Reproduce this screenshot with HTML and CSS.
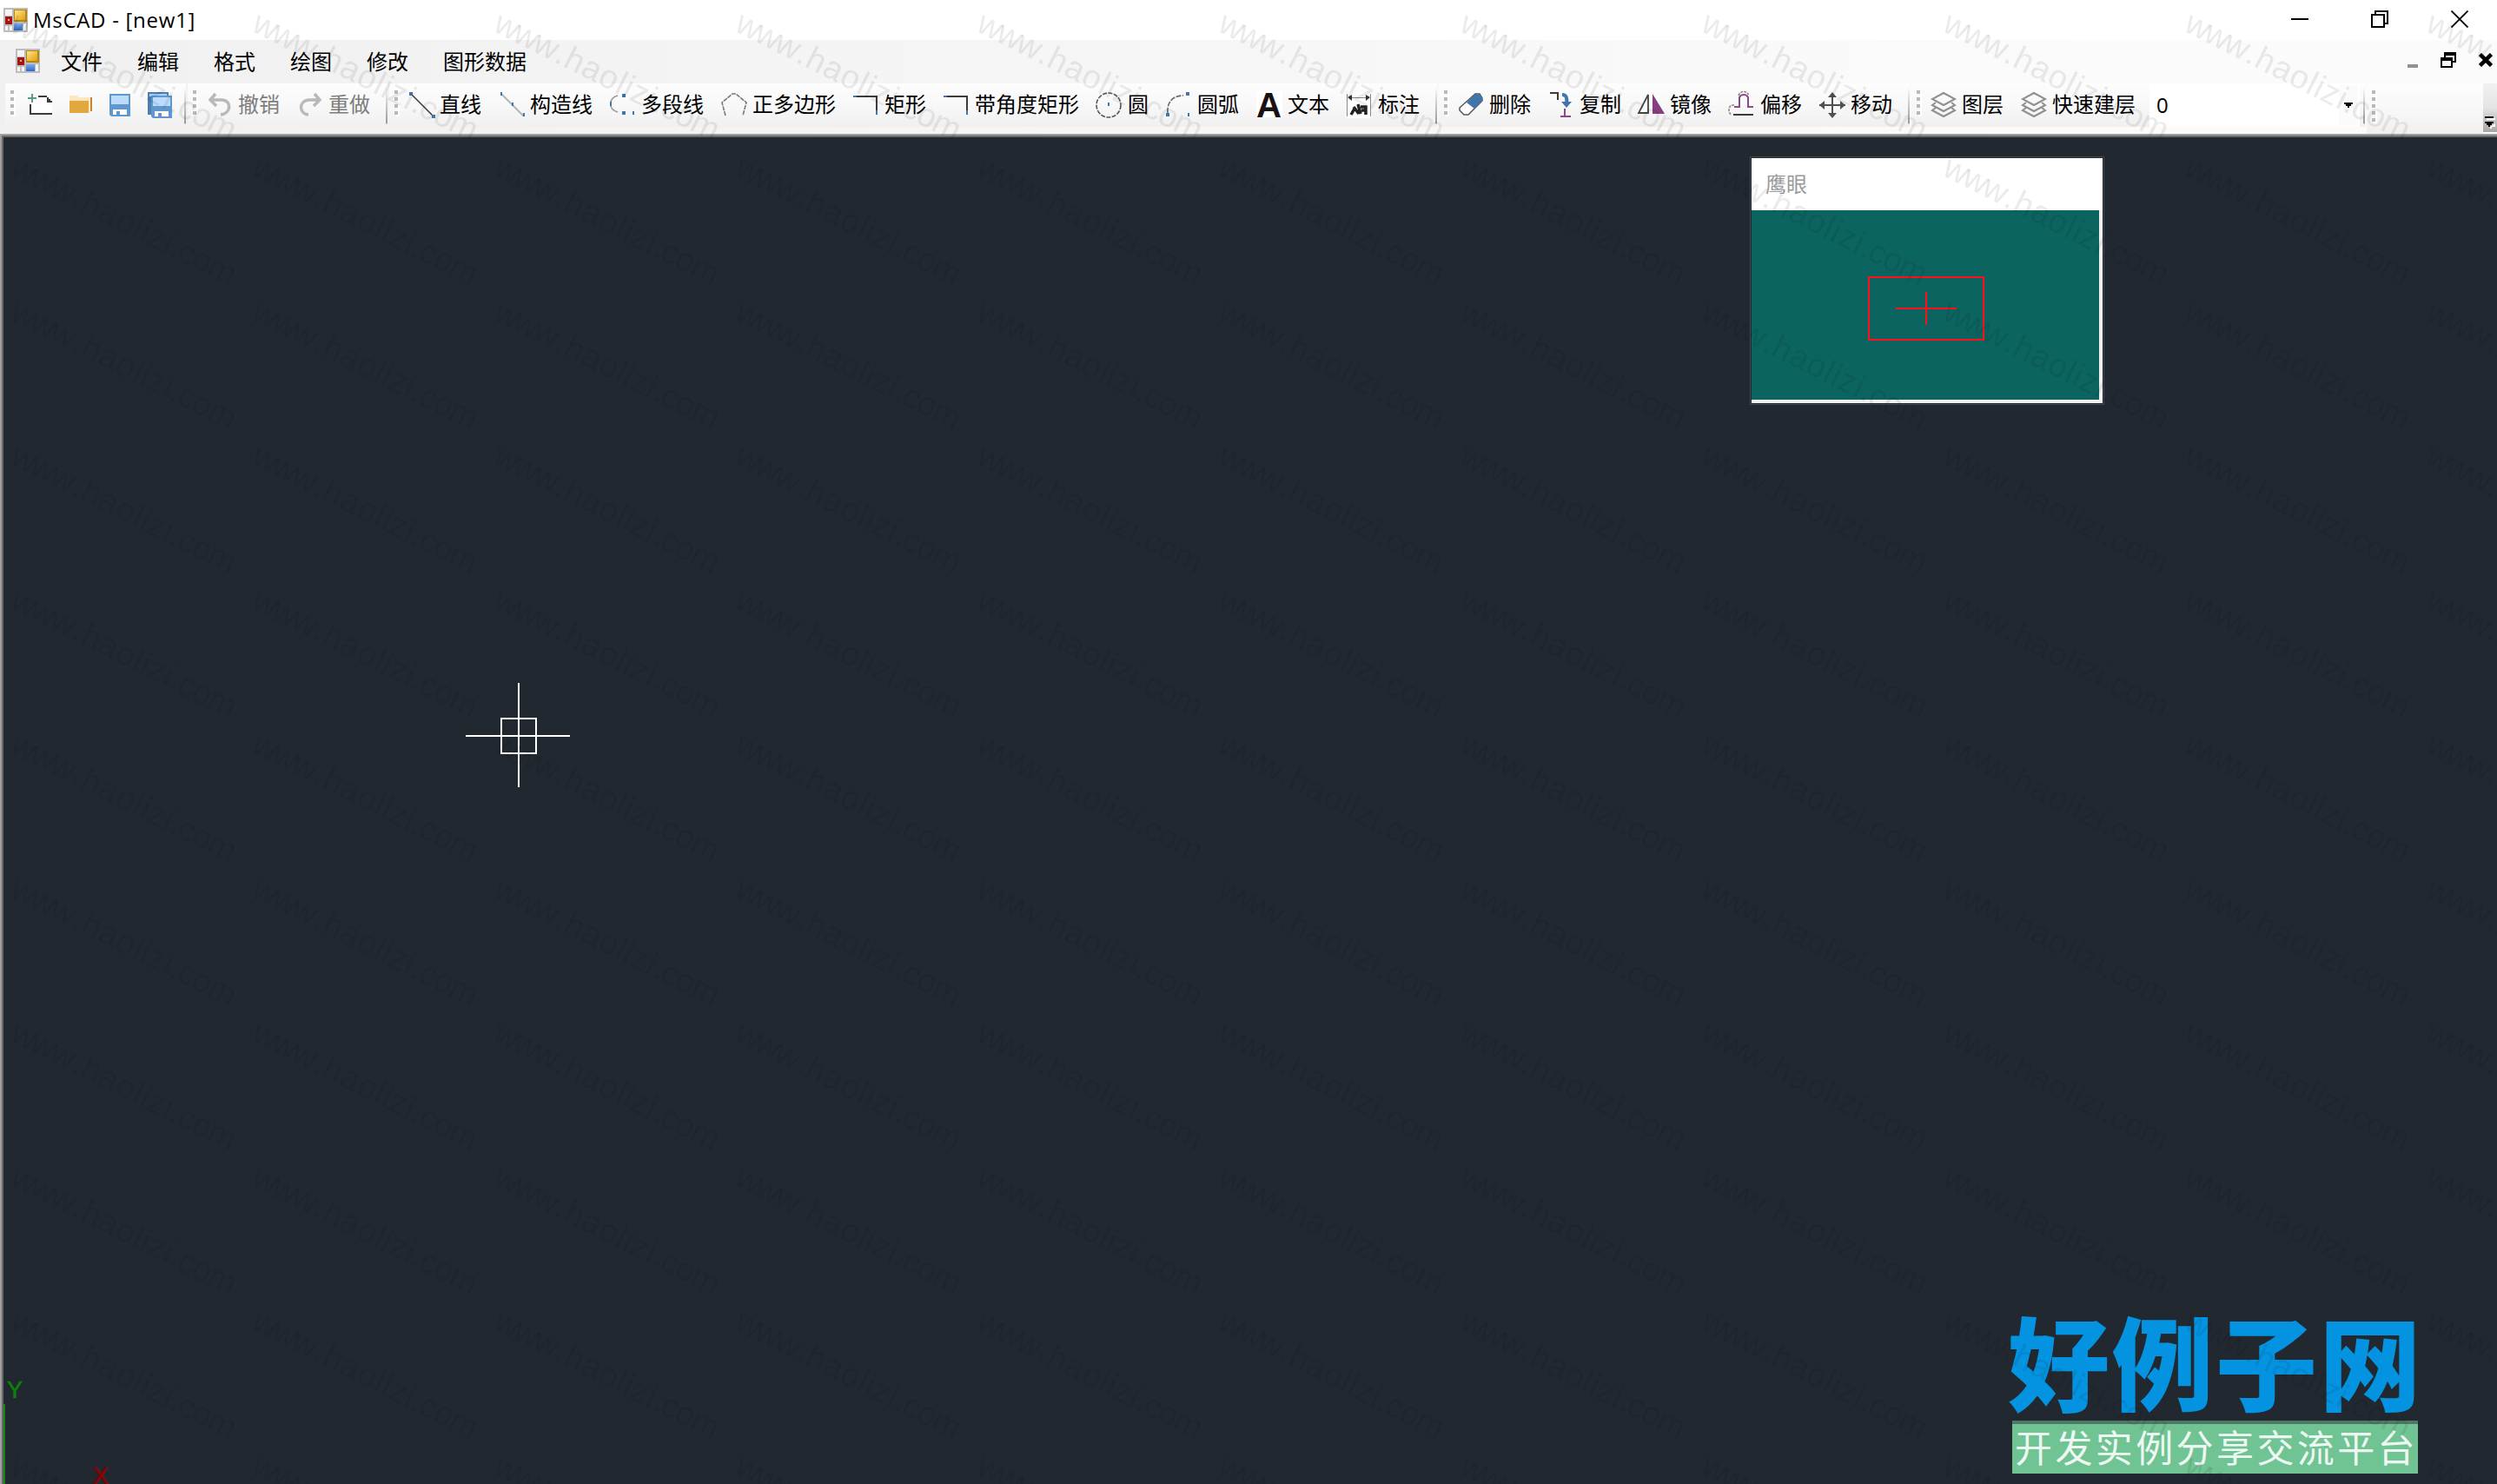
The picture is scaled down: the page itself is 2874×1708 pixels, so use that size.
FILE: index.html
```html
<!DOCTYPE html>
<html lang="zh-CN">
<head>
    <meta charset="UTF-8">
    <title>MsCAD</title>
    <link rel="stylesheet" href="styles.css">
</head>
<body>

<!--公用图形-->
<svg class="defs" width="0" height="0">
    <defs>
        <linearGradient id="gold" x1="0" y1="0" x2="1" y2="1">
            <stop offset="0" stop-color="#ffe48a"/>
            <stop offset="1" stop-color="#e0a010"/>
        </linearGradient>
        <linearGradient id="blue" x1="0" y1="0" x2="0" y2="1">
            <stop offset="0" stop-color="#7fa8ee"/>
            <stop offset="1" stop-color="#2f66c8"/>
        </linearGradient>
        <symbol id="app" viewBox="0 0 28 28">
            <path fill="#bdbdbd" d="M0 0h28v28H0z"/>
            <path fill="#f4f4f4" d="M2 2h8v7H2zM2 21h3v5H2zM7 21h3v5H7zM23 18h3v8h-3z"/>
            <path fill="#b8860b" d="M12 2h15v14H12z"/>
            <path fill="url(#gold)" d="M13 3h12v11H13z"/>
            <path fill="#a31515" d="M2 10h8v9H2z"/>
            <path fill="#f0a0a0" d="M5 13h2v2H5z"/>
            <path fill="url(#blue)" d="M12 18h10v8H12z"/>
        </symbol>
        <symbol id="layers" viewBox="0 0 32 32">
            <g fill="none" stroke="#8f8f8f" stroke-width="2">
                <path d="M15 2L28 9L15 16L2 9z"/>
                <path d="M6 13L2 16L15 23L28 16L24 13"/>
                <path d="M6 19L2 22L15 29L28 22L24 19"/>
            </g>
        </symbol>
        <symbol id="rect" viewBox="0 0 32 32">
            <path fill="#3c3c3c" d="M4 5h24v18h-2V7H4z"/>
            <path fill="#4176ac" d="M0 5h4v2H0zM26 22h2v5h-2z"/>
        </symbol>
        <pattern id="wm" x="2" y="4" width="278" height="166" patternUnits="userSpaceOnUse">
            <g transform="translate(8 31) rotate(26.7)">
                <text class="wm-text" y="0"><tspan x="0" textLength="78">www</tspan><tspan x="79" textLength="125">.haolizi</tspan><tspan x="205" textLength="80">.com</tspan></text>
            </g>
        </pattern>
    </defs>
</svg>

<!--标题栏-->
<div class="titlebar">
    <svg class="app-icon"><use href="#app"/></svg>
    <span class="caption">MsCAD - [new1]</span>
    <div class="win-btns">
        <svg width="20" height="20"><path fill="#000" d="M0 9h20v2H0z"/></svg>
        <svg width="20" height="20"><path fill="none" stroke="#000" stroke-width="2" d="M1 5h14v14H1zM5 5V1h14v14h-4"/></svg>
        <svg width="20" height="20"><path fill="none" stroke="#000" stroke-width="1.8" d="M.5 .5l19 19M19.5 .5l-19 19"/></svg>
    </div>
</div>

<!--菜单栏-->
<div class="menubar">
    <svg class="app-icon"><use href="#app"/></svg>
    <ul class="menu">
        <li>文件</li>
        <li>编辑</li>
        <li>格式</li>
        <li>绘图</li>
        <li>修改</li>
        <li>图形数据</li>
    </ul>
    <div class="mdi-btns">
        <svg width="12" height="18"><path fill="#919191" d="M0 14h12v4H0z"/></svg>
        <svg width="18" height="18"><path fill="#000" fill-rule="evenodd" d="M4 0h14v12h-4v6H0V6h4zM6 4v2h8v4h2V4zM2 10v6h10v-6z"/></svg>
        <svg width="16" height="16"><path fill="none" stroke="#000" stroke-width="4.500" d="M1.500 1.500l13 13M14.500 1.500l-13 13"/></svg>
    </div>
</div>

<!--工具栏-->
<div class="toolbar">
    <div class="strip strip-file">
        <i class="grip"></i>
        <svg class="ico" viewBox="0 0 32 32"><path fill="#fff" d="M4 5h20l6 8v14H4z"/><path fill="#3c3c3c" d="M14 5h10v2h2v2h2v2h2v2h-6V7H14zM4 15h2v10h24v2H4z"/><path fill="#5b9d82" d="M6 3h2v4h4v2H8v4H6V9H2V7h4z"/></svg>
        <svg class="ico" viewBox="0 0 32 32"><path fill="#fde7c2" d="M4 5h10v2h14v18H4z"/><path fill="#e2a840" d="M4 11h22v14H4z"/><path fill="#fde7c2" d="M26 9h2v14h-2z"/><path fill="#c08a2a" d="M28 7h2v16h-2z"/></svg>
        <svg class="ico" viewBox="0 0 32 32"><path fill="#6098ce" d="M4 3h24v26H6l-2-2z"/><path fill="#bbdcfc" d="M6 5h20v10H6z"/><path fill="#fff" d="M8 21h16v6h-8v-4h-4v4H8z"/></svg>
        <svg class="ico" viewBox="0 0 32 32"><path fill="#4d80b2" d="M2 1h24v26H2z"/><path fill="#a8cff5" d="M4 3h20v3H4z"/><path fill="#6098ce" d="M6 5h24v26H8l-2-2z"/><path fill="#bbdcfc" d="M8 7h20v10H8z"/><path fill="#fff" d="M10 23h16v6h-8v-4h-4v4h-4z"/></svg>
    </div>
    <div class="strip strip-undo">
        <i class="grip"></i>
        <a class="btn disabled"><svg class="ico" viewBox="0 0 32 32"><path fill="none" stroke="#b9b9b9" stroke-width="3.500" d="M10 3L4 10l7 7M5 10h13c11 1 10 16-2 17"/></svg><span>撤销</span></a>
        <a class="btn disabled"><svg class="ico" viewBox="0 0 32 32"><path fill="none" stroke="#b9b9b9" stroke-width="3.500" d="M20 3l6 7-7 7M25 10H14C1 11 2 26 13 27"/></svg><span>重做</span></a>
    </div>
    <div class="strip strip-draw">
        <i class="grip"></i>
        <a class="btn"><svg class="ico" viewBox="0 0 32 32"><path stroke="#333" stroke-width="1.500" d="M3 3l26 26"/><path fill="#4176ac" d="M1 1h4v4H1zM27 27h4v4h-4z"/></svg><span>直线</span></a>
        <a class="btn"><svg class="ico" viewBox="0 0 32 32"><path stroke="#b5b5b5" stroke-width="2" d="M3 3l26 26"/><path fill="#4176ac" d="M2 1h2v4H2zM15 13h2v4h-2zM28 25h2v4h-2z"/></svg><span>构造线</span></a>
        <a class="btn"><svg class="ico" viewBox="0 0 32 32"><path fill="none" stroke="#999" stroke-width="1.600" d="M9 5C-2 8-2 21 9 24"/><path fill="#4176ac" d="M14 3h4v4h-4zM14 23h4v4h-4zM26 23h2v4h-2zM0 12h2v5H0z"/></svg><span>多段线</span></a>
        <a class="btn"><svg class="ico" viewBox="0 0 32 32"><path fill="none" stroke="#777" stroke-width="1.600" stroke-dasharray="5 1" d="M5 28L1 13l12-10h4l12 10-4 15"/></svg><span>正多边形</span></a>
        <a class="btn"><svg class="ico"><use href="#rect"/></svg><span>矩形</span></a>
        <a class="btn"><svg class="ico"><use href="#rect"/></svg><span>带角度矩形</span></a>
        <a class="btn"><svg class="ico" viewBox="0 0 32 32"><circle cx="14" cy="16" r="14" fill="none" stroke="#555" stroke-width="1.600" stroke-dasharray="5 1.500"/><path fill="#4176ac" d="M13 13h2v4h-2z"/></svg><span>圆</span></a>
        <a class="btn"><svg class="ico" viewBox="0 0 32 32"><path fill="none" stroke="#666" stroke-width="1.600" stroke-dasharray="6 1.500" d="M2 25C1 12 8 5 20 5"/><path fill="#4176ac" d="M23 1h4v4h-4zM0 25h4v4H0zM25 25h2v4h-2z"/></svg><span>圆弧</span></a>
        <a class="btn"><svg class="ico" viewBox="0 0 32 32"><path fill="#fff" d="M0 0h30v30H0z"/><text class="ico-a" x="0" y="30" textLength="29" lengthAdjust="spacingAndGlyphs">A</text></svg><span>文本</span></a>
        <a class="btn"><svg class="ico" viewBox="0 0 32 32"><path fill="#fff" d="M0 1h28v30H0z"/><path fill="#888" d="M0 3h1v26H0zM27 3h1v26h-1zM2 7h24v1H2z"/><path fill="#333" d="M1 7l5-3v7zM27 7l-5-3v7z"/><path fill="none" stroke="#222" stroke-width="3.500" d="M5 27l4-7M8 18l6 8M13 15l3 11M16 18h6v9M17 22h5"/></svg><span>标注</span></a>
    </div>
    <div class="strip strip-modify">
        <i class="grip"></i>
        <a class="btn"><svg class="ico" viewBox="0 0 32 32"><path fill="#fff" stroke="#555" stroke-width="1.500" d="M20 3h5l3 5v3L12 27H7l-5-5v-3z"/><path fill="#4176ac" d="M20 3h5l3 5v3l-9 9-9-7z"/></svg><span>删除</span></a>
        <a class="btn"><svg class="ico" viewBox="0 0 32 32"><path fill="#3c3c3c" d="M2 1h10v9h-2V3H2z"/><path fill="none" stroke="#4176ac" stroke-width="4" d="M16 4c5 0 6 4 5 10"/><path fill="#4176ac" d="M15 12h12l-6 7z"/><path fill="#8a4a88" d="M18 20h2v8h6v2H14v-2h4z"/></svg><span>复制</span></a>
        <a class="btn"><svg class="ico" viewBox="0 0 32 32"><path fill="#fff" stroke="#444" stroke-width="1.800" d="M11 4v21H0z"/><path fill="#873e80" d="M16 3v23h14z"/></svg><span>镜像</span></a>
        <a class="btn"><svg class="ico" viewBox="0 0 32 32"><path fill="none" stroke="#888" stroke-width="1.600" stroke-dasharray="3 1" d="M11 5c2-6 10-6 12 0M6 16c-8-1-7 10-3 11"/><path fill="none" stroke="#8d4a89" stroke-width="2" d="M6 18h6V7c2-4 8-4 10 0v11h6"/><path fill="#3c3c3c" d="M5 26h23v2H5z"/></svg><span>偏移</span></a>
        <a class="btn"><svg class="ico" viewBox="0 0 32 32"><path fill="none" stroke="#505050" stroke-width="2" d="M0 16h30M15 2v28"/><path fill="#505050" d="M15 1l5 6H10zM15 31l5-6H10zM0 16l6-5v10zM30 16l-6-5v10z"/></svg><span>移动</span></a>
    </div>
    <div class="strip strip-layer">
        <i class="grip"></i>
        <a class="btn"><svg class="ico"><use href="#layers"/></svg><span>图层</span></a>
        <a class="btn"><svg class="ico"><use href="#layers"/></svg><span>快速建层</span></a>
        <div class="combo">
            <span>0</span>
            <i class="combo-btn"><svg width="10" height="6"><path d="M0 0h10v2H8v2H6v2H4V4H2V2H0z"/></svg></i>
        </div>
    </div>
    <div class="strip strip-rest">
        <i class="grip grip-long"></i>
    </div>
    <div class="overflow">
        <svg width="12" height="14"><path fill="#fff" d="M2 2h10v2H2zM12 8v4h-4v2H6v-2z"/><path d="M0 0h10v2H0zM0 6h10v2H8v2H6v2H4v-2H2V8H0z"/></svg>
    </div>
</div>

<!--绘图区-->
<div class="workspace">
    <svg class="cursor" width="120" height="120"><path fill="none" stroke="#fff" stroke-width="2" d="M0 61h120M61 0v120M41 41h40v40H41z"/></svg>

    <!--坐标轴-->
    <span class="axis axis-y">Y</span>
    <i class="axis-line"></i>
    <span class="axis axis-x">X</span>

    <!--鹰眼窗口-->
    <div class="eye">
        <div class="eye-title">鹰眼</div>
        <div class="eye-view">
            <svg width="134" height="74"><path fill="none" stroke="#ff0f1b" stroke-width="2" d="M1 1h132v72H1zM32 37h70M67 18v38"/></svg>
        </div>
    </div>

    <div class="logo">
        <div class="logo-name">好例子网</div>
        <div class="logo-sub">开发实例分享交流平台</div>
    </div>
</div>

<!--水印-->
<svg class="watermark"><rect width="100%" height="100%" fill="url(#wm)"/></svg>

</body>
</html>
```
FILE: styles.css
```css
body, ul, li {
    padding: 0;
    margin: 0;
}

ul, li {
    list-style: none;
}

body {
    position: relative;
    display: flex;
    flex-direction: column;
    height: 1708px;
    overflow: hidden;
    font: 24px/32px "Noto Sans CJK SC", sans-serif;
    color: #000;
    background: #fff;
}

svg {
    display: block;
    flex: none;
}

.defs {
    position: absolute;
}

.app-icon {
    width: 28px;
    height: 28px;
}

/*标题栏*/
.titlebar {
    display: flex;
    align-items: center;
    height: 46px;
    padding-left: 4px;
}

.caption {
    margin-left: 6px;
    font: 24px/46px "Open Sans", "Noto Sans", sans-serif;
    letter-spacing: 0.7px;
}

.win-btns {
    display: flex;
    gap: 72px;
    margin-left: auto;
    padding: 0 33px 2px 0;
}

/*菜单栏*/
.menubar {
    display: flex;
    align-items: center;
    height: 50px;
    padding-left: 18px;
    background: linear-gradient(to right, #f0f0f0, #fbfbfb 2400px);
}

.menubar .app-icon {
    margin-bottom: 2px;
}

.menu {
    display: flex;
    gap: 40px;
    margin: 0 0 3px 24px;
}

.mdi-btns {
    display: flex;
    align-items: center;
    gap: 26px;
    margin-left: auto;
    padding: 0 5px 4px 0;
}

/*工具栏*/
.toolbar {
    display: flex;
    height: 58px;
    padding-left: 6px;
    background: linear-gradient(to right, #f0f0f0, #fbfbfb 2400px);
}

.strip {
    display: flex;
    align-items: center;
    box-sizing: border-box;
    height: 50px;
    padding-left: 6px;
    margin-right: 2px;
    border-right: 2px solid;
    border-image: linear-gradient(transparent 10%, #999 90%, transparent 92%) 1;
    background: linear-gradient(#fdfdfd, #f8f8f8 50%, #f0f0f0);
}

.strip-file {
    width: 208px;
}

.strip-file .ico {
    margin-right: 14px;
}

.strip-undo {
    width: 230px;
    margin-right: 2px;
}

.strip-draw {
    width: 1206px;
}

.strip-modify {
    width: 542px;
}

.strip-layer {
    width: 524px;
}

.strip-rest {
    width: 134px;
    height: 58px;
    margin: 0;
    border: 0;
}

.grip {
    flex: none;
    width: 4px;
    height: 28px;
    margin: 0 12px 6px 0;
    background: repeating-linear-gradient(#b8b8b8 0 4px, transparent 4px 8px);
    box-shadow: 2px 2px 0 #fff;
}

.strip-file .grip {
    margin-right: 14px;
}

.grip-long {
    height: 36px;
}

.btn {
    display: flex;
    align-items: center;
    margin-right: 20px;
    white-space: nowrap;
}

/*文字比图标略高*/
.btn span {
    margin-bottom: 4px;
}

.ico {
    width: 32px;
    height: 32px;
    overflow: visible;
}

.btn .ico {
    margin-right: 4px;
}

.disabled {
    color: #7d7d7d;
}

.ico-a {
    font: bold 41px "Liberation Sans", sans-serif;
    fill: #1b1014;
}

.combo {
    display: flex;
    align-items: center;
    justify-content: space-between;
    box-sizing: border-box;
    width: 242px;
    height: 50px;
    margin-left: -4px;
    padding: 0 2px 0 8px;
    background: #fff;
    font-family: "Open Sans", sans-serif;
}

.combo-btn {
    display: flex;
    align-items: center;
    justify-content: center;
    width: 22px;
    height: 46px;
    background: #fbfbfb;
}

.overflow {
    display: flex;
    align-items: flex-end;
    justify-content: center;
    box-sizing: border-box;
    width: 16px;
    height: 56px;
    padding-bottom: 4px;
    background: linear-gradient(#f2f2f2, #e4e4e4 50%, #a6a6a6);
}

/*绘图区*/
.workspace {
    position: relative;
    flex: 1;
    box-sizing: border-box;
    border-top: 2px solid #a0a0a0;
    border-left: 2px solid #a0a0a0;
    background: #222830;
    box-shadow: inset 2px 2px 0 #696969;
    overflow: hidden;
}

.cursor {
    position: absolute;
    left: 534px;
    top: 630px;
}

.axis {
    position: absolute;
    font: 27px/28px "Liberation Sans", sans-serif;
}

.axis-y {
    left: 6px;
    top: 1430px;
    color: #0b800b;
    -webkit-text-stroke: 0.6px #0b800b;
}

.axis-x {
    left: 105px;
    top: 1529px;
    height: 22px;
    color: #8b0000;
    -webkit-text-stroke: 0.6px #8b0000;
}

.axis-line {
    position: absolute;
    left: 2px;
    bottom: 0;
    width: 2px;
    height: 92px;
    background: #148214;
}

/*鹰眼*/
.eye {
    position: absolute;
    left: 2014px;
    top: 26px;
    width: 404px;
    height: 282px;
    background: #f0f0f0;
    outline: 1px solid #42464d;
    outline-offset: 1px;
}

.eye-title {
    height: 60px;
    padding-left: 16px;
    line-height: 57px;
    color: #999;
    background: #fff;
}

.eye-view {
    display: flex;
    align-items: center;
    justify-content: center;
    width: 400px;
    height: 218px;
    background: #0c6460;
}

.eye-view svg {
    margin: 8px 0 0 2px;
}

/*站点标志*/
.logo {
    position: absolute;
    left: 2314px;
    top: 1346px;
    width: 467px;
}

.logo-name {
    height: 133px;
    margin-left: -5px;
    font-size: 117px;
    line-height: 125px;
    font-weight: 900;
    letter-spacing: 2.5px;
    color: #0393e0;
    white-space: nowrap;
}

.logo-sub {
    box-sizing: border-box;
    height: 61px;
    padding-left: 3px;
    border-top: 4px solid #4e7a65;
    background: #70c393;
    color: #eef8f2;
    font-size: 43px;
    line-height: 50px;
    letter-spacing: 3.4px;
    white-space: nowrap;
}

/*水印*/
.watermark {
    position: absolute;
    left: 0;
    top: 0;
    width: 2874px;
    height: 1708px;
    pointer-events: none;
}

.wm-text {
    font: 38px "Liberation Sans", sans-serif;
    fill: #000;
    fill-opacity: 0.08;
}
```
